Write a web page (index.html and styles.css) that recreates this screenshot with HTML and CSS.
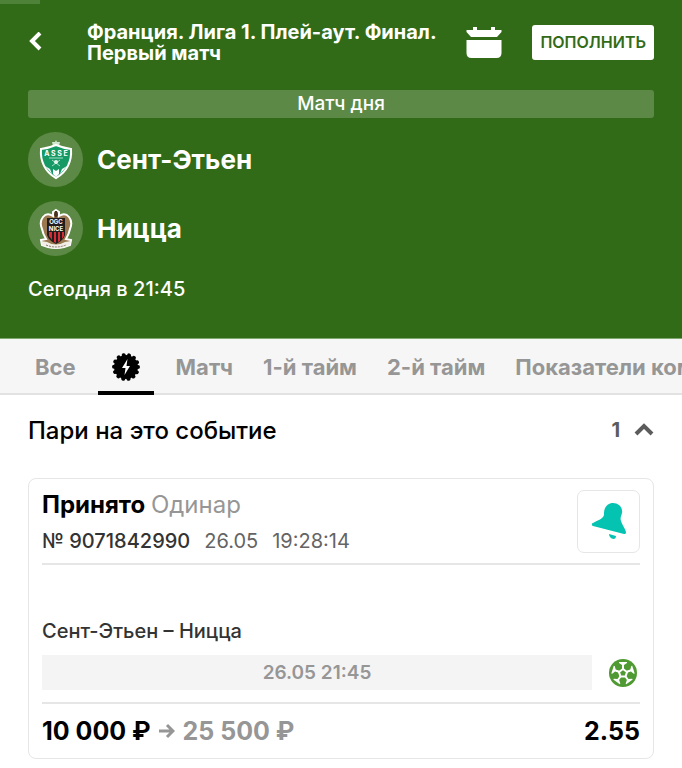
FILE: index.html
```html
<!DOCTYPE html>
<html lang="ru">
<head>
<meta charset="utf-8">
<meta name="viewport" content="width=device-width, initial-scale=1">
<title>Сент-Этьен – Ницца</title>
<link rel="stylesheet" href="styles.css">
</head>
<body>
<header class="hero">
  <div class="loader"></div>
  <div class="topbar">
    <button class="icon-button back" type="button" aria-label="Назад">
      <svg width="16" height="20" viewBox="0 0 16 20"><path d="M12 1 4 9l8 8" fill="none" stroke="#fff" stroke-width="4"/></svg>
    </button>
    <h1 class="league">Франция. Лига 1. Плей-аут. Финал. Первый матч</h1>
    <button class="icon-button" type="button" aria-label="Календарь">
      <svg width="36" height="32" viewBox="0 0 36 32" fill="#fff"><path d="M0.500 4H7V1h4v3h14V1h4v3h6.500v2L31 11H5L0.500 6z"/><path d="M0.500 14h35v13q0 5-5 5h-25q-5 0-5-5z"/></svg>
    </button>
    <button class="deposit" type="button">ПОПОЛНИТЬ</button>
  </div>
  <p class="banner">Матч дня</p>
  <div class="teams">
    <div class="team">
      <span class="crest">
        <svg width="34" height="40" viewBox="0 0 34 40">
          <path d="M17 0l1 2 3 0-1 4h-6l-1-4 3 0z" fill="#d3e5d2"/>
          <path d="M17 5q7 3 15 4c1 12-4 23-15 29C6 32 1 21 2 9q8-1 15-4z" fill="#159a66" stroke="#fff" stroke-width="2"/>
          <text x="17" y="16" class="crest-asse">A S S E</text>
          <path d="M10 18h14M13 20l8 6m0-6-8 6" stroke="#a9dcc5" fill="none"/>
          <circle cx="17" cy="22" r="2" fill="#e6f6ee"/>
          <path d="M6 26l5 3 2 5zM28 26l-5 3-2 5zM14 29l3 2 3-2v5l-3 3-3-3z" fill="#fff"/>
        </svg>
      </span>
      <h2 class="team-name">Сент-Этьен</h2>
    </div>
    <div class="team">
      <span class="crest">
        <svg width="34" height="42" viewBox="0 0 34 42">
          <path d="M17 2l3 2v4q6-4 10 1 4 5 1 12-1 5-4 10l5 1-1 5-6 2q-8 2-16 0l-6-2-1-5 5-1q-3-5-4-10Q0 14 4 9q4-5 10-1V4z" fill="#9b7950" stroke="#fff" stroke-width="2"/>
          <path d="M16 3h2l1 4-2 3-2-3z" fill="#463221"/>
          <path d="M8 10h18v17q-2 6-9 9-7-3-9-9z" fill="#211c1d"/>
          <path d="M10 24h3v8l-3-4zM15 24h2v11l-2-1zM19 24h2v9l-2 1zM23 24h2v4l-2 3z" fill="#d82b36"/>
          <text x="17" y="16" class="crest-nice">OGC</text>
          <text x="17" y="23" class="crest-nice">NICE</text>
          <path d="M2 33l6 1q9 5 18 0l6-1-1 4-5 2q-9 3-18 0l-5-2z" fill="#f1eee8"/>
          <path d="M7 37q10 4 20 0" stroke="#88796b" fill="none" stroke-dasharray="2 1"/>
        </svg>
      </span>
      <h2 class="team-name">Ницца</h2>
    </div>
  </div>
  <p class="kickoff">Сегодня в 21:45</p>
</header>

<nav class="tabs" aria-label="Рынки">
  <a class="tab" href="#all">Все</a>
  <a class="tab active" href="#bets" aria-label="Мои пари" aria-current="page">
    <svg width="28" height="28" viewBox="0 0 28 28"><circle cx="14" cy="14" r="12"/><circle cx="14" cy="14" r="12" fill="none" stroke="#000" stroke-width="4" stroke-linecap="round" stroke-dasharray="0.010 5.376"/><path d="M15.500 6 10 15h3.500L12.500 22 18 13h-3.500z" fill="#fff"/></svg>
  </a>
  <a class="tab" href="#match">Матч</a>
  <a class="tab" href="#half-1">1-й тайм</a>
  <a class="tab" href="#half-2">2-й тайм</a>
  <a class="tab" href="#teams">Показатели команд</a>
</nav>

<main class="content">
  <button class="section-toggle" type="button" aria-expanded="true">
    <span class="section-title">Пари на это событие</span>
    <span class="count">1</span>
    <svg width="20" height="14" viewBox="0 0 20 14"><path d="M2 11l8-8 8 8" fill="none" stroke="#5c5c5c" stroke-width="4"/></svg>
  </button>

  <article class="bet">
    <div class="bet-head">
      <div class="bet-info">
        <h3 class="status">Принято <span class="kind">Одинар</span></h3>
        <p class="meta"><span class="number">№ 9071842990</span><span>26.05</span><span>19:28:14</span></p>
      </div>
      <button class="bell" type="button" aria-label="Уведомления">
        <svg width="36" height="36" viewBox="0 0 36 36" fill="#05c3b1"><path d="M13 12C12.500 4 17 0 22 0c6 0 10 5 9 10-1 4-2 5-1 8 1 4 4 7 5 11 0 2-1 2-2 2L2 23c-2-1-1-3 0-3 5-3 10-4 11-8z"/><path d="M18 31l7 2c0 5-7 3-7-2z"/></svg>
      </button>
    </div>
    <div class="bet-event">
      <p class="event-name">Сент-Этьен – Ницца</p>
      <div class="event-row">
        <time class="event-time">26.05 21:45</time>
        <svg class="ball" width="28" height="28" viewBox="0 0 28 28">
          <defs><path id="seam" d="M10 3h8v1l-3 2v4h-2V6l-3-2z" fill="#fff"/></defs>
          <circle cx="14" cy="14" r="14" fill="#4f9a32"/>
          <path d="M14 10l4 3-1.500 4.500h-5L10 13z" fill="none" stroke="#fff" stroke-width="2"/>
          <use href="#seam"/><use href="#seam" transform="rotate(72 14 14)"/><use href="#seam" transform="rotate(144 14 14)"/><use href="#seam" transform="rotate(216 14 14)"/><use href="#seam" transform="rotate(288 14 14)"/>
        </svg>
      </div>
    </div>
    <div class="bet-total">
      <span>10 000 ₽</span>
      <svg width="16" height="18" viewBox="0 0 16 18"><path d="M0 9h14M8 3l6 6-6 6" fill="none" stroke="#969696" stroke-width="3"/></svg>
      <span class="payout">25 500 ₽</span>
      <strong class="odds">2.55</strong>
    </div>
  </article>
</main>
</body>
</html>
```
FILE: styles.css
```css
* {
  box-sizing: border-box;
}

body {
  margin: 0;
  background: #fff;
  color: #000;
  font-family: Inter, "Noto Sans", sans-serif;
  overflow-x: hidden;
}

h1, h2, h3, p {
  margin: 0;
}

button {
  margin: 0;
  padding: 0;
  border: 0;
  background: none;
  color: inherit;
  font-family: inherit;
  cursor: pointer;
}

svg {
  display: block;
  flex: none;
}

.hero {
  padding: 0 28px 36px;
  background: #326b17;
  border-bottom: 1px solid #80a770;
  color: #fff;
}

.loader {
  width: 40px;
  height: 4px;
  margin-left: -28px;
  background: #4e8238;
}

.topbar {
  display: flex;
  align-items: center;
  min-height: 76px;
}

.icon-button {
  flex: none;
}

.back {
  width: 59px;
}

.league {
  flex: 1;
  padding: 2px 24px 0 0;
  font-size: 20px;
  line-height: 21px;
  font-weight: 700;
}

.deposit {
  height: 35px;
  margin-left: 30px;
  padding: 0 8px;
  border-radius: 3px;
  background: #fff;
  color: #326b17;
  font-size: 16px;
  font-weight: 600;
}

.banner {
  margin-top: 10px;
  border-radius: 3px;
  background: #5c8945;
  font-size: 19px;
  line-height: 28px;
  font-weight: 500;
  text-align: center;
}

.teams {
  display: grid;
  gap: 14px;
  margin-top: 14px;
}

.team {
  display: flex;
  align-items: center;
  gap: 14px;
}

.crest {
  display: grid;
  place-items: center;
  width: 55px;
  height: 55px;
  border-radius: 50%;
  background: #5c8945;
}

.crest-asse,
.crest-nice {
  fill: #fff;
  font-size: 7px;
  font-weight: 700;
  text-anchor: middle;
}

.crest-nice {
  font-size: 6px;
}

.team-name {
  font-size: 26px;
  line-height: 32px;
  font-weight: 700;
}

.kickoff {
  margin-top: 20px;
  font-size: 20px;
  line-height: 26px;
  font-weight: 500;
}

.tabs {
  display: flex;
  height: 56px;
  padding-left: 21px;
  gap: 2px;
  overflow: hidden;
  background: #f6f6f6;
  box-shadow: inset 0 -2px #e2e2e2;
}

.tab {
  flex: none;
  padding: 0 14px;
  color: #969696;
  font-size: 22px;
  line-height: 56px;
  font-weight: 700;
  text-decoration: none;
}

.active {
  display: flex;
  align-items: center;
  margin: 0 6px;
  padding-top: 4px;
  border-bottom: 4px solid #000;
}

.content {
  padding: 0 28px;
}

.section-toggle {
  display: flex;
  align-items: center;
  width: 100%;
  height: 70px;
  text-align: left;
}

.section-title {
  flex: 1;
  font-size: 24px;
  font-weight: 500;
}

.count {
  margin-right: 14px;
  color: #5c5c5c;
  font-size: 20px;
  font-weight: 700;
}

.bet {
  margin-top: 13px;
  padding: 0 13px;
  border: 1px solid #e6e6e6;
  border-radius: 8px;
}

.bet-head {
  display: flex;
  align-items: center;
  height: 86px;
  border-bottom: 2px solid #e6e6e6;
}

.bet-info {
  flex: 1;
  padding-top: 3px;
}

.status {
  font-size: 24px;
  line-height: 36px;
  font-weight: 700;
}

.kind {
  color: #969696;
  font-weight: 400;
}

.meta {
  display: flex;
  gap: 14px;
  color: #646464;
  font-size: 20px;
  line-height: 36px;
}

.number {
  color: #333;
  font-weight: 500;
}

.bell {
  display: grid;
  place-items: center;
  width: 63px;
  height: 63px;
  border: 1px solid #e6e6e6;
  border-radius: 7px;
}

.bet-event {
  padding: 52px 0 12px;
  border-bottom: 2px solid #e6e6e6;
}

.event-name {
  color: #333;
  font-size: 20px;
  line-height: 28px;
  font-weight: 500;
}

.event-row {
  display: flex;
  align-items: center;
  gap: 17px;
  margin-top: 10px;
  padding-right: 3px;
}

.event-time {
  flex: 1;
  background: #f4f4f4;
  color: #969696;
  font-size: 19px;
  line-height: 35px;
  font-weight: 600;
  text-align: center;
}

.bet-total {
  display: flex;
  align-items: center;
  gap: 8px;
  height: 54px;
  font-size: 25px;
  font-weight: 700;
}

.payout {
  color: #969696;
}

.odds {
  margin-left: auto;
  font-weight: 700;
}
```
